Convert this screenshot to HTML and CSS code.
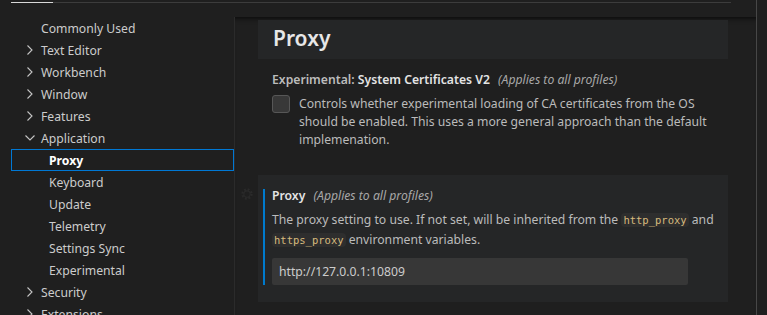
FILE: index.html
```html
<!DOCTYPE html>
<html lang="en">
<head>
    <meta charset="UTF-8">
    <title>Settings - Proxy</title>
    <link rel="stylesheet" href="styles.css">
</head>
<body>
    <div class="window">
        <div class="editor">
            <!-- tabs (User / Workspace) cut off at the top -->
            <div class="tabbar">
                <div class="tab-line"><span class="tab-active"></span></div>
            </div>

            <div class="settings-body">
                <!-- table of contents -->
                <div class="toc">
                    <div class="tree-row leaf">Commonly Used</div>
                    <div class="tree-row"><svg class="chevron" viewBox="0 0 16 16"><polyline points="5.5,3.5 10,8 5.5,12.5"/></svg>Text Editor</div>
                    <div class="tree-row"><svg class="chevron" viewBox="0 0 16 16"><polyline points="5.5,3.5 10,8 5.5,12.5"/></svg>Workbench</div>
                    <div class="tree-row"><svg class="chevron" viewBox="0 0 16 16"><polyline points="5.5,3.5 10,8 5.5,12.5"/></svg>Window</div>
                    <div class="tree-row"><svg class="chevron" viewBox="0 0 16 16"><polyline points="5.5,3.5 10,8 5.5,12.5"/></svg>Features</div>
                    <div class="tree-row"><svg class="chevron" viewBox="0 0 16 16"><polyline points="3.5,5.5 8,10 12.5,5.5"/></svg>Application</div>
                    <div class="tree-row child selected">Proxy</div>
                    <div class="tree-row child">Keyboard</div>
                    <div class="tree-row child">Update</div>
                    <div class="tree-row child">Telemetry</div>
                    <div class="tree-row child">Settings Sync</div>
                    <div class="tree-row child">Experimental</div>
                    <div class="tree-row"><svg class="chevron" viewBox="0 0 16 16"><polyline points="5.5,3.5 10,8 5.5,12.5"/></svg>Security</div>
                    <div class="tree-row"><svg class="chevron" viewBox="0 0 16 16"><polyline points="5.5,3.5 10,8 5.5,12.5"/></svg>Extensions</div>
                </div>

                <!-- settings list -->
                <div class="settings-list">
                    <div class="group-title">Proxy</div>

                    <div class="setting">
                        <div class="setting-content">
                            <div class="setting-title">
                                <span class="category">Experimental: </span><span class="label">System Certificates V2</span>
                                <span class="scope">(Applies to all profiles)</span>
                            </div>
                            <div class="checkbox-row">
                                <span class="checkbox"></span>
                                <div class="description">Controls whether experimental loading of CA certificates from the OS<br>should be enabled. This uses a more general approach than the default<br>implemenation.</div>
                            </div>
                        </div>
                    </div>

                    <div class="setting focused">
                        <svg class="gear" viewBox="0 0 16 16">
                            <circle cx="8" cy="8" r="5.2" stroke-width="2.6" stroke-dasharray="2.1 2"/>
                            <circle cx="8" cy="8" r="3.6" stroke-width="1.2"/>
                        </svg>
                        <div class="setting-content">
                            <div class="setting-title">
                                <span class="label">Proxy</span>
                                <span class="scope">(Applies to all profiles)</span>
                            </div>
                            <div class="description wide">The proxy setting to use. If not set, will be inherited from the <code>http_proxy</code> and<br><code>https_proxy</code> environment variables.</div>
                            <div class="text-input">http://127.0.0.1:10809</div>
                        </div>
                    </div>
                </div>
            </div>
        </div>
        <div class="edge"></div>
    </div>
</body>
</html>
```

FILE: styles.css
```css
* {
    box-sizing: border-box;
    margin: 0;
    padding: 0;
}
body {
    background: #1f1f1f;
    color: #cccccc;
    font-family: 'Noto Sans', 'Open Sans', sans-serif;
    font-size: 12.2px;
    width: 767px;
    height: 315px;
    overflow: hidden;
}
.window {
    display: flex;
    height: 315px;
}
.editor {
    width: 756px;
    flex: none;
    display: flex;
    flex-direction: column;
}
.edge {
    flex: 1;
    border-left: 1px solid #474747;
}

/* tab strip */
.tabbar {
    height: 17px;
    padding: 2px 25px 0 11px;
}
.tab-line {
    height: 1px;
    background: #3c3c3c;
}
.tab-active {
    display: block;
    width: 42px;
    height: 1px;
    background: #d8d8d8;
}

.settings-body {
    flex: 1;
    display: flex;
    min-height: 0;
}

/* table of contents */
.toc {
    flex: none;
    width: 235px;
    border-right: 1px solid #2b2b2b;
    overflow: hidden;
}
.tree-row {
    display: flex;
    align-items: center;
    height: 22px;
    width: 223px;
    margin-left: 11px;
    padding-left: 10px;
    border: 1px solid transparent;
    white-space: nowrap;
}
.tree-row.leaf {
    padding-left: 29px;
}
.tree-row.child {
    padding-left: 37px;
}
.tree-row.selected {
    border-color: #0078d4;
    color: #ffffff;
    font-weight: 700;
}
.chevron {
    flex: none;
    width: 16px;
    height: 16px;
    margin-right: 3px;
    fill: none;
    stroke: #c5c5c5;
    stroke-width: 1.1;
}

/* settings list */
.settings-list {
    flex: 1;
    min-width: 0;
    padding: 3px 28px 0 23px;
    box-shadow: #000 0 6px 6px -6px inset;
}
.group-title {
    height: 39px;
    line-height: 37px;
    padding-left: 15px;
    background: #252627;
    color: #e7e7e7;
    font-size: 21px;
    font-weight: 600;
}
.setting {
    position: relative;
    padding: 14px 0 17px 5px;
}
.setting + .setting {
    margin-top: 9px;
}
.setting.focused {
    background: #252627;
}
.setting-content {
    border-left: 2px solid transparent;
    padding-left: 7px;
}
.setting.focused .setting-content {
    border-left-color: #007acc;
}
.setting-title {
    line-height: 14px;
    white-space: nowrap;
}
.category {
    color: #bcbcbc;
    font-weight: 600;
}
.label {
    color: #e4e4e4;
    font-weight: 600;
}
.scope {
    color: #a8a8a8;
    font-style: italic;
    margin-left: 5px;
}
.checkbox-row {
    display: flex;
    gap: 9px;
    margin-top: 8px;
}
.checkbox {
    flex: none;
    width: 18px;
    height: 18px;
    background: #383838;
    border: 1px solid #575757;
    border-radius: 3px;
}
.description {
    color: #bbbbbb;
    line-height: 18px;
    white-space: nowrap;
}
.description.wide {
    line-height: 19px;
    margin-top: 7px;
}
code {
    font-family: 'DejaVu Sans Mono', 'Liberation Mono', monospace;
    font-size: 10.5px;
    color: #d7ba7d;
    background: #2e2e2e;
    border-radius: 4px;
    padding: 1px 2px;
}
.text-input {
    margin-top: 8px;
    width: 416px;
    height: 27px;
    line-height: 27px;
    padding-left: 7px;
    background: #373737;
    border-radius: 2px;
    color: #cccccc;
}
.gear {
    position: absolute;
    left: -18px;
    top: 12px;
    width: 14px;
    height: 14px;
    fill: none;
    stroke: #2a2a2a;
}
```
